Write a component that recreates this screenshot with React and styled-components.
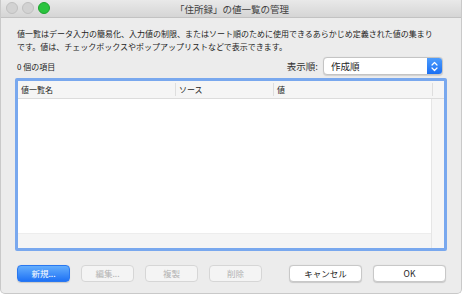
import React from "react";
import styled, { createGlobalStyle } from "styled-components";

const Global = createGlobalStyle`
  html, body {
    margin: 0;
    padding: 0;
    background: #ffffff;
  }
  body {
    font-family: "Noto Sans CJK JP", "Liberation Sans", sans-serif;
    color: #1c1c1c;
    -webkit-font-smoothing: antialiased;
  }
`;

const columns = [
  { name: "値一覧名", width: 158 },
  { name: "ソース", width: 98 },
  { name: "値", width: 159 },
];

export default function App() {
  return (
    <>
      <Global />
      <Window>
        <TitleBar>
          <Lights>
            <Light />
            <Light />
            <Light $color="#2ac43e" $border="#1ea32f" />
          </Lights>
          <Title>「住所録」の値一覧の管理</Title>
        </TitleBar>
        <Body>
          <Description>
            値一覧はデータ入力の簡易化、入力値の制限、またはソート順のために使用できるあらかじめ定義された値の集まり
            <br />
            です。値は、チェックボックスやポップアップリストなどで表示できます。
          </Description>
          <InfoRow>
            <span>0 個の項目</span>
            <SortGroup>
              <SortLabel>表示順:</SortLabel>
              <Popup>
                <PopupText>作成順</PopupText>
                <Stepper>
                  <svg width="7" height="11" viewBox="0 0 7 11">
                    <path
                      d="M1 4 L3.5 1.5 L6 4 M1 7 L3.5 9.5 L6 7"
                      fill="none"
                      stroke="#fff"
                      strokeWidth="1.2"
                      strokeLinecap="round"
                      strokeLinejoin="round"
                    />
                  </svg>
                </Stepper>
              </Popup>
            </SortGroup>
          </InfoRow>
          <Table>
            <Header>
              {columns.map((col) => (
                <HeaderCell key={col.name} style={{ width: col.width }}>
                  {col.name}
                </HeaderCell>
              ))}
              <HeaderCorner />
            </Header>
            <TableBody>
              <Rows>
                <RowArea />
                <HScroll />
              </Rows>
              <VScroll />
            </TableBody>
          </Table>
          <Buttons>
            <Group>
              <Button $primary>新規...</Button>
              <Button disabled>編集...</Button>
              <Button disabled>複製</Button>
              <Button disabled>削除</Button>
            </Group>
            <Group>
              <Button $wide>キャンセル</Button>
              <Button $wide>OK</Button>
            </Group>
          </Buttons>
        </Body>
      </Window>
    </>
  );
}

const Window = styled.div`
  width: 462px;
  height: 294px;
  box-sizing: border-box;
  background: #ececec;
  border: 1px solid #c9c9c9;
  border-top: none;
  border-radius: 0 0 5px 5px;
  display: flex;
  flex-direction: column;
  overflow: hidden;
`;

const TitleBar = styled.div`
  height: 17px;
  flex: none;
  position: relative;
  display: flex;
  align-items: center;
  justify-content: center;
  background: linear-gradient(#e9e9e9, #d5d5d5);
  border-bottom: 1px solid #c2c2c2;
`;

const Lights = styled.div`
  position: absolute;
  left: 5px;
  top: 2px;
  display: flex;
  gap: 4px;
`;

const Light = styled.div`
  width: 12px;
  height: 12px;
  border-radius: 50%;
  box-sizing: border-box;
  background: ${(p) => p.$color || "#d2d2d2"};
  border: 1px solid ${(p) => p.$border || "#c0c0c0"};
`;

const Title = styled.div`
  font-size: 9.5px;
  line-height: 12px;
  color: #404040;
  margin-left: 2px;
`;

const Body = styled.div`
  flex: 1;
  display: flex;
  flex-direction: column;
  padding: 9px 14px 0 14px;
`;

const Description = styled.div`
  font-size: 8px;
  line-height: 13px;
  padding-left: 2px;
  white-space: nowrap;
`;

const InfoRow = styled.div`
  margin-top: 4px;
  height: 18px;
  display: flex;
  align-items: center;
  justify-content: space-between;
  font-size: 8px;
  padding-left: 2px;
  padding-right: 4px;
`;

const SortGroup = styled.div`
  display: flex;
  align-items: center;
  gap: 5px;
`;

const SortLabel = styled.span`
  font-size: 9.5px;
  color: #333;
`;

const Popup = styled.div`
  width: 120px;
  height: 18px;
  box-sizing: border-box;
  display: flex;
  align-items: stretch;
  background: #fff;
  border: 1px solid #c4c4c4;
  border-radius: 4px;
  box-shadow: 0 0.5px 1px rgba(0, 0, 0, 0.12);
  overflow: hidden;
`;

const PopupText = styled.span`
  flex: 1;
  font-size: 9.5px;
  line-height: 16px;
  padding-left: 7px;
`;

const Stepper = styled.div`
  width: 15px;
  display: flex;
  align-items: center;
  justify-content: center;
  background: linear-gradient(#4c9cfd, #1b6ff3);
`;

const Table = styled.div`
  margin-top: 3px;
  height: 173px;
  box-sizing: border-box;
  border: 3px solid #79a8ee;
  border-radius: 2px;
  display: flex;
  flex-direction: column;
  background: #fff;
`;

const Header = styled.div`
  height: 17px;
  flex: none;
  display: flex;
  background: #f5f5f5;
  border-bottom: 1px solid #dcdcdc;
`;

const HeaderCell = styled.div`
  box-sizing: border-box;
  font-size: 8px;
  padding-left: 3px;
  border-right: 1px solid #dedede;
  margin: 2px 0;
  line-height: 13px;
`;

const HeaderCorner = styled.div`
  flex: 1;
`;

const TableBody = styled.div`
  flex: 1;
  display: flex;
`;

const Rows = styled.div`
  flex: 1;
  display: flex;
  flex-direction: column;
`;

const RowArea = styled.div`
  flex: 1;
  background: #fff;
`;

const HScroll = styled.div`
  height: 14px;
  background: #f5f5f5;
  border-top: 1px solid #ededed;
`;

const VScroll = styled.div`
  width: 12px;
  background: #f6f6f6;
  border-left: 1px solid #e6e6e6;
`;

const Buttons = styled.div`
  margin-top: 14px;
  display: flex;
  justify-content: space-between;
  padding: 0 1px 0 2px;
`;

const Group = styled.div`
  display: flex;
  gap: 11px;
`;

const Button = styled.button`
  width: ${(p) => (p.$wide ? "73px" : "53px")};
  height: 17px;
  box-sizing: border-box;
  padding: 0;
  font-family: "Noto Sans CJK JP", "Liberation Sans", sans-serif;
  font-size: 8.5px;
  line-height: 15px;
  border-radius: 4px;
  border: 1px solid ${(p) => (p.$primary ? "#2a78f0" : "#c8c8c8")};
  color: ${(p) => (p.$primary ? "#ffffff" : "#1c1c1c")};
  background: ${(p) =>
    p.$primary ? "linear-gradient(#64aefd, #1f72f5)" : "#ffffff"};
  box-shadow: 0 0.5px 1px rgba(0, 0, 0, 0.15);
  &:disabled {
    color: #b3b3b3;
    background: #f4f4f4;
    border-color: #d6d6d6;
    box-shadow: none;
  }
`;
